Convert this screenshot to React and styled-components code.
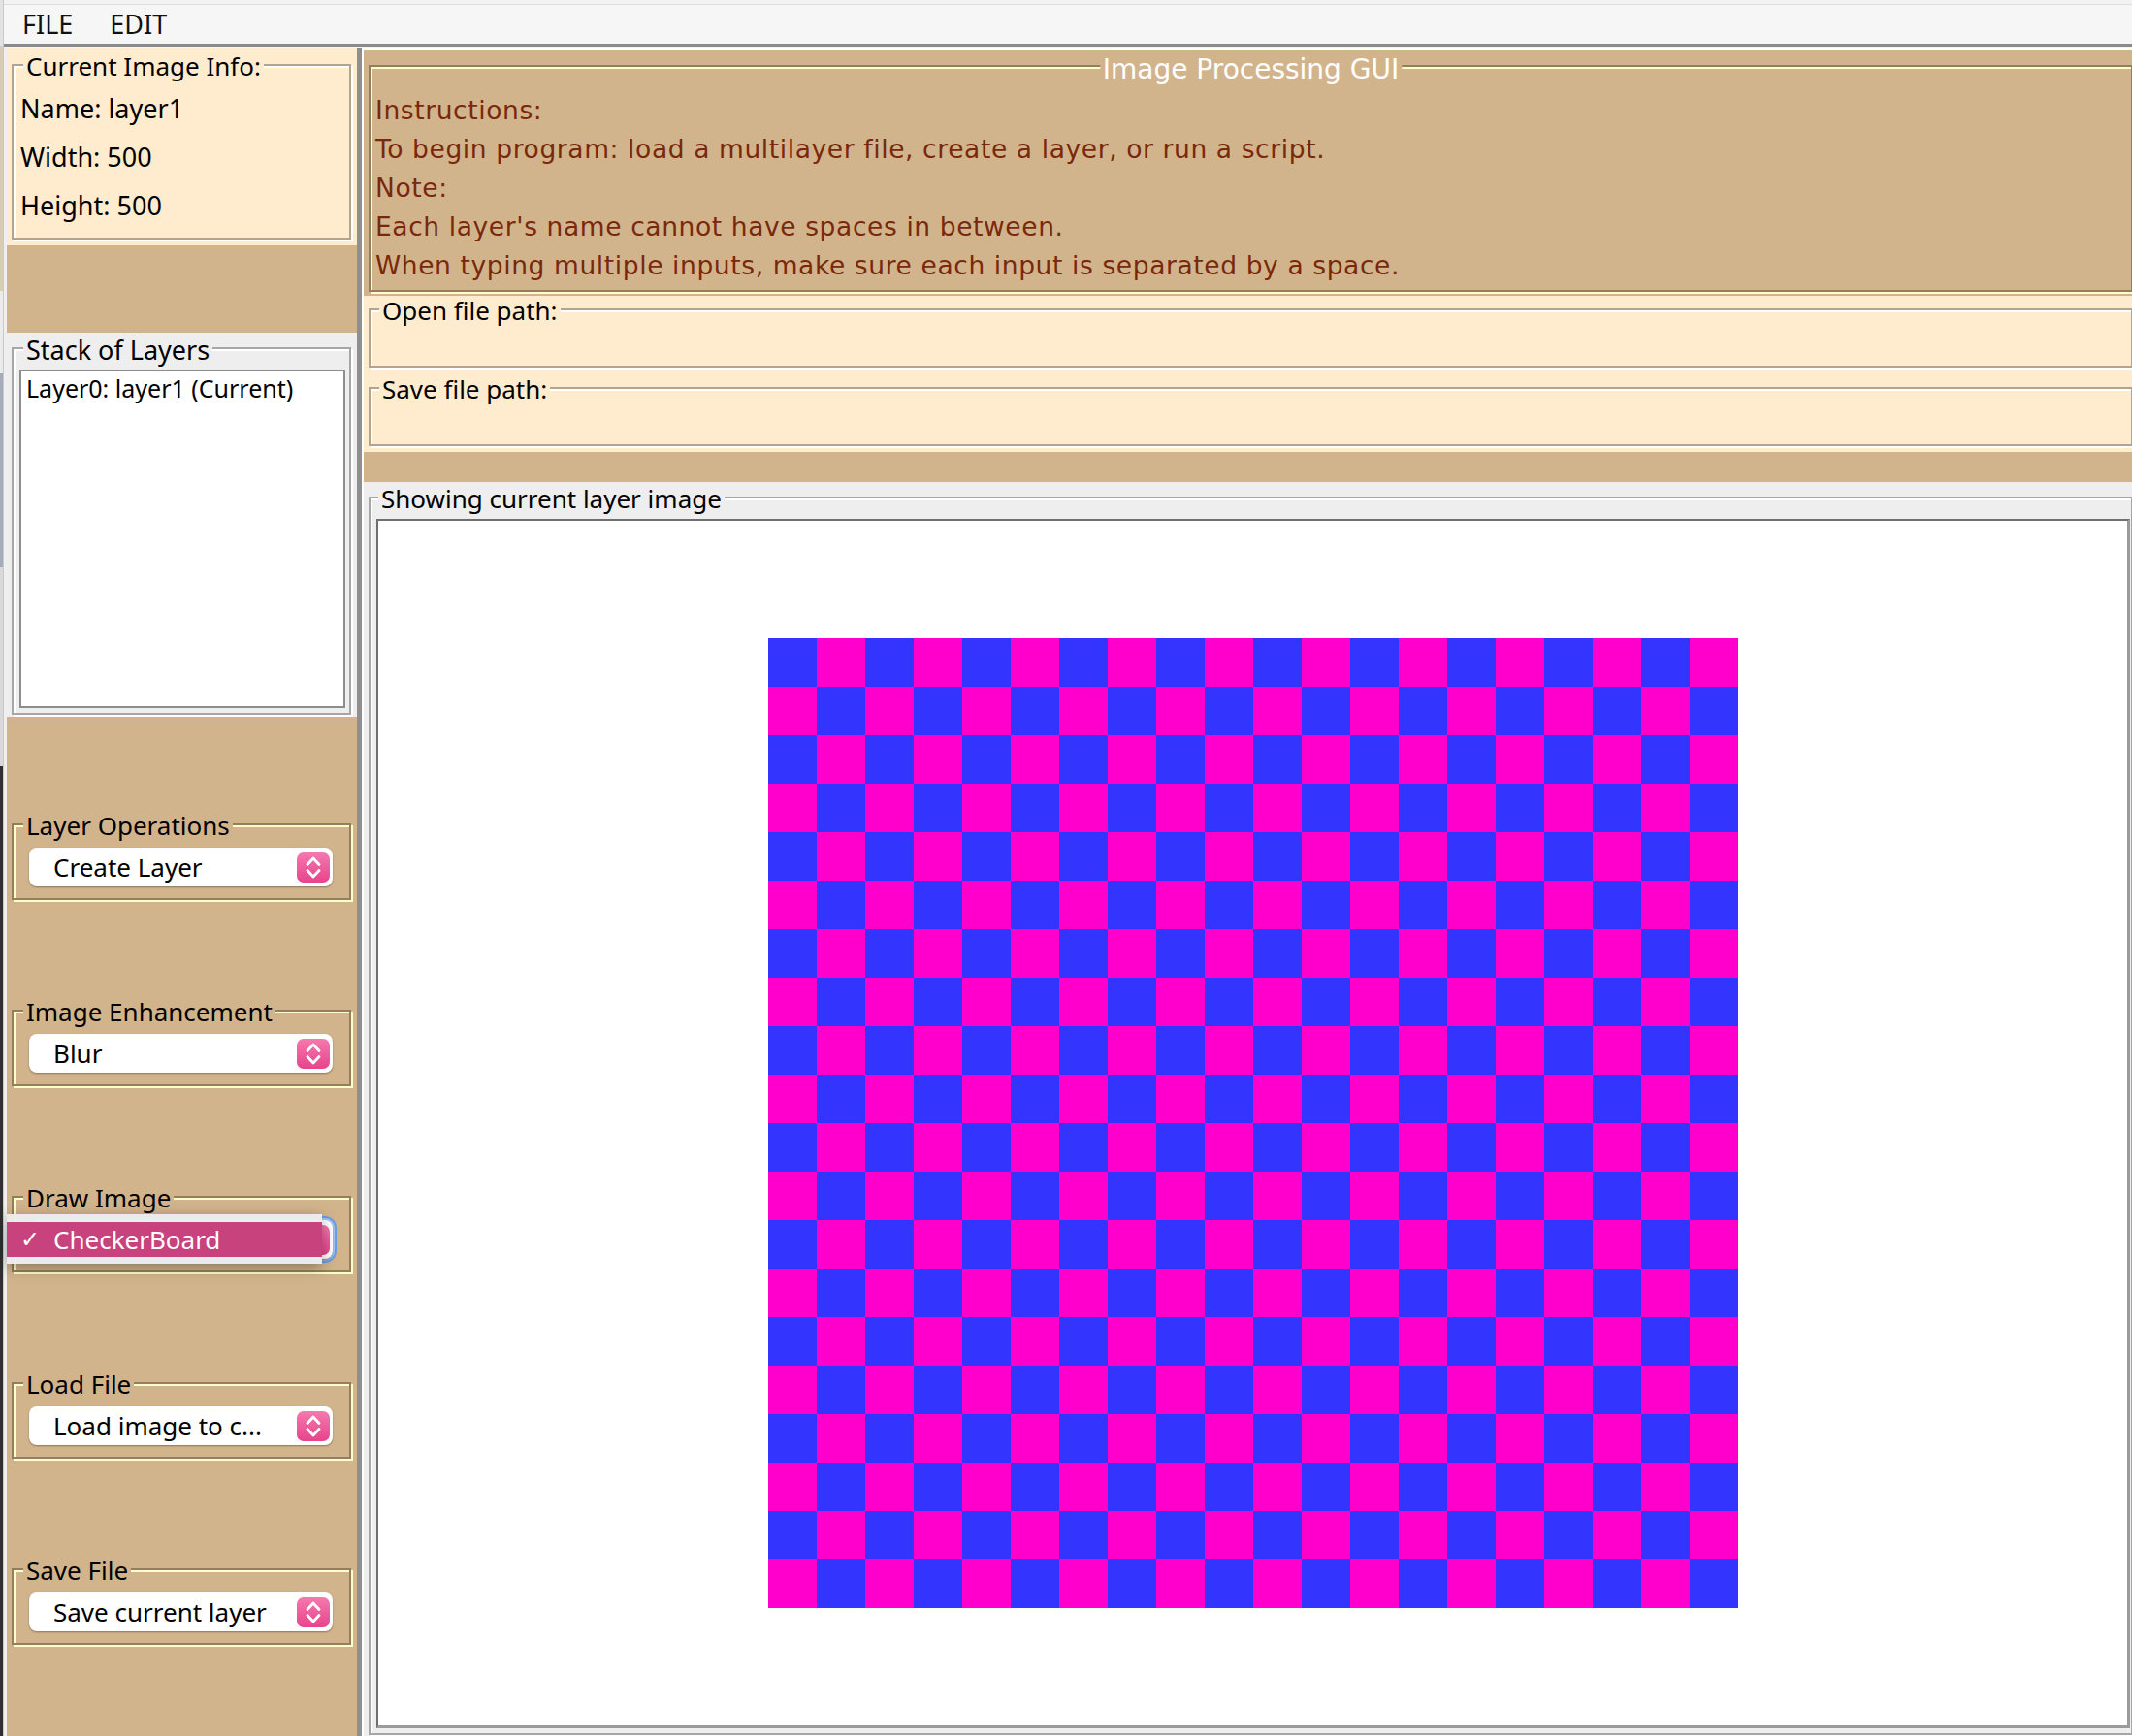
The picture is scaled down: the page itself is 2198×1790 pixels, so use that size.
import React from "react";
import styled, { createGlobalStyle, css } from "styled-components";

const TAN = "#d2b48c";
const BEIGE = "#ffebcd";
const GRAY = "#eeeeee";
const TAN_DARK = "#937e62";
const TAN_LIGHT = "#ffffc8";
const BEIGE_DARK = "#b2a48f";
const GRAY_DARK = "#a6a6a6";

const GlobalStyle = createGlobalStyle`
  html, body { margin: 0; padding: 0; overflow: hidden; background: #2f2f2f; }
  #root { width: 2198px; height: 1790px; overflow: hidden; }
  * { box-sizing: border-box; }
`;

const etched = (dark, light) => css`
  border: 2px solid ${dark};
  box-shadow: inset 2px 2px 0 ${light}, 2px 2px 0 ${light};
`;

const Screen = styled.div`
  display: flex;
  width: 2204px;
  height: 1790px;
  font-family: "Noto Sans", sans-serif;
`;

const BackStrip = styled.div`
  flex: none;
  width: 4px;
  background: linear-gradient(
    to bottom,
    #e2e2e2 0 47px,
    #d9ccb2 47px 300px,
    #ebebeb 300px 385px,
    #a4acba 385px 585px,
    #d9d9d9 585px 790px,
    #2f2f2f 790px
  );
  border-right: 1px solid #c9c9c9;
`;

const Window = styled.div`
  flex: 1;
  display: flex;
  flex-direction: column;
  min-width: 0;
`;

const MenuBar = styled.div`
  flex: none;
  height: 48px;
  display: flex;
  align-items: center;
  gap: 38px;
  padding: 4px 0 0 19px;
  background: #f6f6f6;
  border-bottom: 3px solid #8a8a8a;
  box-shadow: inset 0 4px 0 #f2f2f2, inset 0 5px 0 #dddddd;
`;

const MenuItem = styled.span`
  font: 27px/1 "Noto Sans", sans-serif;
  color: #111;
`;

const Body = styled.div`
  flex: 1;
  display: flex;
  min-height: 0;
  border-top: 2px solid #f5f5f5;
  border-left: 3px solid #efefef;
`;

const LeftColumn = styled.div`
  flex: none;
  width: 361px;
  display: flex;
  flex-direction: column;
`;

const Divider = styled.div`
  flex: none;
  width: 5px;
  background: #8f8f8f;
`;

const RightColumn = styled.div`
  flex: 1;
  min-width: 0;
  display: flex;
  flex-direction: column;
  border-left: 2px solid #ffffff;
  border-top: 2px solid #ffffff;
`;

const Panel = styled.div`
  flex: ${(p) => (p.$grow ? 1 : "none")};
  display: flex;
  flex-direction: column;
  gap: ${(p) => p.$gap || 0}px;
  background: ${(p) => p.$bg};
  padding: ${(p) => p.$pad};
  height: ${(p) => (p.$h ? `${p.$h}px` : "auto")};
  min-height: 0;
`;

const Spacer = styled.div`
  flex: none;
  height: ${(p) => p.$h}px;
  background: ${(p) => p.$bg};
`;

const TitledBox = styled.div`
  position: relative;
  flex: ${(p) => (p.$grow ? 1 : "none")};
  display: flex;
  flex-direction: column;
  height: ${(p) => (p.$h ? `${p.$h}px` : "auto")};
  padding: ${(p) => p.$pad || "0"};
  ${(p) => etched(p.$dark, p.$light)}
  min-height: 0;
`;

const BoxTitle = styled.span`
  position: absolute;
  top: ${(p) => p.$top || 0}px;
  left: ${(p) => (p.$center ? "50%" : `${p.$left}px`)};
  transform: ${(p) => (p.$center ? "translate(-50%, -50%)" : "translateY(-50%)")};
  padding: 0 3px;
  background: ${(p) => p.$bg};
  color: ${(p) => p.$color || "#000"};
  font-family: ${(p) => (p.$comic ? '"DejaVu Sans", sans-serif' : '"Noto Sans", sans-serif')};
  font-size: ${(p) => p.$size}px;
  line-height: 1;
  white-space: nowrap;
  z-index: 1;
`;

const InfoLine = styled.div`
  height: 50px;
  font: 27px/50px "Noto Sans", sans-serif;
  color: #000;
  white-space: nowrap;
`;

const ListBox = styled.div`
  flex: 1;
  background: #ffffff;
  border: 2px solid #8e8e8e;
  padding: 2px 5px;
`;

const ListItem = styled.div`
  font: 25px/30px "Noto Sans", sans-serif;
  color: #000;
  white-space: nowrap;
`;

const Combo = styled.div`
  position: relative;
  height: 40px;
  display: flex;
  align-items: center;
  padding: 0 3px 0 25px;
  border-radius: 8px;
  background: #ffffff;
  box-shadow: 0 1px 2px rgba(0, 0, 0, 0.35)
    ${(p) => (p.$focus ? ", 0 0 0 2px #a9c8f5, 0 0 0 4px #6d9de6" : "")};
`;

const ComboText = styled.span`
  flex: 1;
  font: 26px/40px "Noto Sans", sans-serif;
  color: #000;
  white-space: nowrap;
  overflow: hidden;
`;

const Stepper = styled.span`
  flex: none;
  width: 34px;
  height: 31px;
  border-radius: 7px;
  background: linear-gradient(#f47aae, #e8438b);
  display: flex;
  align-items: center;
  justify-content: center;
`;

const Popup = styled.div`
  position: absolute;
  left: -7px;
  top: 17px;
  width: 325px;
  height: 51px;
  padding-top: 8px;
  background: rgba(236, 236, 236, 0.97);
  box-shadow: 0 4px 14px rgba(0, 0, 0, 0.35);
  z-index: 3;
`;

const PopupItem = styled.div`
  height: 36px;
  display: flex;
  align-items: center;
  background: #c8427e;
  color: #ffffff;
`;

const Check = styled.span`
  width: 48px;
  padding-left: 14px;
  font: 24px/1 "DejaVu Sans", sans-serif;
`;

const PopupText = styled.span`
  font: 26px/1 "Noto Sans", sans-serif;
`;

const InstructionLine = styled.div`
  height: 40px;
  font: 26.5px/40px "DejaVu Sans", sans-serif;
  letter-spacing: 0.6px;
  color: #7a280b;
  white-space: nowrap;
`;

const ScrollArea = styled.div`
  flex: 1;
  display: flex;
  align-items: center;
  justify-content: center;
  background: #ffffff;
  border-top: 2px solid #6f6f6f;
  border-left: 2px solid #6f6f6f;
  border-right: 3px solid #9b9b9b;
  border-bottom: 3px solid #9b9b9b;
  overflow: hidden;
`;

const Stepicon = () => (
  <svg width="34" height="31" viewBox="0 0 34 31">
    <polyline points="11,12.5 17,6 23,12.5" fill="none" stroke="#fff" strokeWidth="2.8" strokeLinecap="round" strokeLinejoin="round" />
    <polyline points="11,18.5 17,25 23,18.5" fill="none" stroke="#fff" strokeWidth="2.8" strokeLinecap="round" strokeLinejoin="round" />
  </svg>
);

const Checkerboard = () => (
  <svg width="1000" height="1000" viewBox="0 0 1000 1000" shapeRendering="crispEdges">
    <defs>
      <pattern id="cb" width="100" height="100" patternUnits="userSpaceOnUse">
        <rect x="0" y="0" width="50" height="50" fill="#3434ff" />
        <rect x="50" y="0" width="50" height="50" fill="#ff00cc" />
        <rect x="0" y="50" width="50" height="50" fill="#ff00cc" />
        <rect x="50" y="50" width="50" height="50" fill="#3434ff" />
      </pattern>
    </defs>
    <rect width="1000" height="1000" fill="url(#cb)" />
  </svg>
);

const ToolGroup = ({ title, value, focus, popup }) => (
  <TitledBox $dark={TAN_DARK} $light={TAN_LIGHT} $pad="23px 17px 12px 16px">
    <BoxTitle $left={10} $size={26} $bg={TAN}>{title}</BoxTitle>
    <Combo $focus={focus}>
      <ComboText>{value}</ComboText>
      <Stepper><Stepicon /></Stepper>
    </Combo>
    {popup && (
      <Popup>
        <PopupItem>
          <Check>✓</Check>
          <PopupText>{popup}</PopupText>
        </PopupItem>
      </Popup>
    )}
  </TitledBox>
);

const tools = [
  { title: "Layer Operations", value: "Create Layer" },
  { title: "Image Enhancement", value: "Blur" },
  { title: "Draw Image", value: "", focus: true, popup: "CheckerBoard" },
  { title: "Load File", value: "Load image to c..." },
  { title: "Save File", value: "Save current layer" },
];

const instructions = [
  "Instructions:",
  "To begin program: load a multilayer file, create a layer, or run a script.",
  "Note:",
  "Each layer's name cannot have spaces in between.",
  "When typing multiple inputs, make sure each input is separated by a space.",
];

export default function App() {
  return (
    <>
      <GlobalStyle />
      <Screen>
        <BackStrip />
        <Window>
          <MenuBar>
            <MenuItem>FILE</MenuItem>
            <MenuItem>EDIT</MenuItem>
          </MenuBar>
          <Body>
            <LeftColumn>
              <Panel $bg={BEIGE} $pad="16px 6px 6px 5px">
                <TitledBox $dark={BEIGE_DARK} $light="#ffffff" $pad="19px 4px 8px 7px">
                  <BoxTitle $left={10} $size={26} $bg={BEIGE}>Current Image Info:</BoxTitle>
                  <InfoLine>Name: layer1</InfoLine>
                  <InfoLine>Width: 500</InfoLine>
                  <InfoLine>Height: 500</InfoLine>
                </TitledBox>
              </Panel>
              <Spacer $h={90} $bg={TAN} />
              <Panel $bg={GRAY} $pad="15px 6px 2px 5px">
                <TitledBox $dark={GRAY_DARK} $light="#ffffff" $h={379} $pad="21px 4px 5px 6px">
                  <BoxTitle $left={10} $size={27} $bg={GRAY}>Stack of Layers</BoxTitle>
                  <ListBox>
                    <ListItem>Layer0: layer1 (Current)</ListItem>
                  </ListBox>
                </TitledBox>
              </Panel>
              <Panel $grow $bg={TAN} $gap={113} $pad="110px 6px 0 5px">
                {tools.map((t) => (
                  <ToolGroup key={t.title} {...t} />
                ))}
              </Panel>
            </LeftColumn>
            <Divider />
            <RightColumn>
              <Panel $bg={TAN} $pad="15px 5px 4px 5px">
                <TitledBox $dark={TAN_DARK} $light={TAN_LIGHT} $h={234} $pad="25px 4px 5px 5px">
                  <BoxTitle $center $comic $top={3} $size={28} $bg={TAN} $color="#ffffff">Image Processing GUI</BoxTitle>
                  {instructions.map((line) => (
                    <InstructionLine key={line}>{line}</InstructionLine>
                  ))}
                </TitledBox>
              </Panel>
              <Panel $bg={BEIGE} $gap={20} $pad="13px 5px 6px 5px">
                <TitledBox $dark={BEIGE_DARK} $light="#ffffff" $h={61}>
                  <BoxTitle $left={9} $size={26} $bg={BEIGE}>Open file path:</BoxTitle>
                </TitledBox>
                <TitledBox $dark={BEIGE_DARK} $light="#ffffff" $h={61}>
                  <BoxTitle $left={9} $size={26} $bg={BEIGE}>Save file path:</BoxTitle>
                </TitledBox>
              </Panel>
              <Spacer $h={31} $bg={TAN} />
              <Panel $grow $bg={GRAY} $pad="15px 5px 1px 5px">
                <TitledBox $grow $dark={GRAY_DARK} $light="#ffffff" $pad="21px 1px 5px 6px">
                  <BoxTitle $left={8} $size={26} $bg={GRAY}>Showing current layer image</BoxTitle>
                  <ScrollArea>
                    <Checkerboard />
                  </ScrollArea>
                </TitledBox>
              </Panel>
            </RightColumn>
          </Body>
        </Window>
      </Screen>
    </>
  );
}
